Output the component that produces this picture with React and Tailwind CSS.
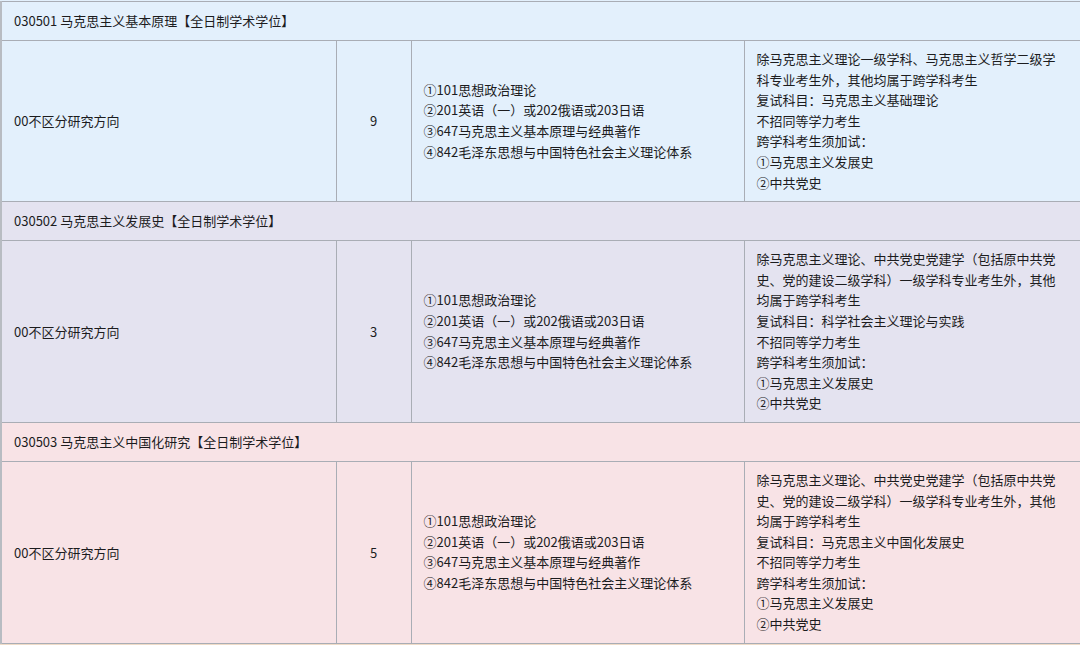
import React from "react";

const exams = [
  "①101思想政治理论",
  "②201英语（一）或202俄语或203日语",
  "③647马克思主义基本原理与经典著作",
  "④842毛泽东思想与中国特色社会主义理论体系",
];

const sections = [
  {
    title: "030501 马克思主义基本原理【全日制学术学位】",
    count: 9,
    bg: "bg-[#e3f0fc]",
    notes: [
      "除马克思主义理论一级学科、马克思主义哲学二级学科专业考生外，其他均属于跨学科考生",
      "复试科目：马克思主义基础理论",
      "不招同等学力考生",
      "跨学科考生须加试：",
      "①马克思主义发展史",
      "②中共党史",
    ],
  },
  {
    title: "030502 马克思主义发展史【全日制学术学位】",
    count: 3,
    bg: "bg-[#e4e3f0]",
    notes: [
      "除马克思主义理论、中共党史党建学（包括原中共党史、党的建设二级学科）一级学科专业考生外，其他均属于跨学科考生",
      "复试科目：科学社会主义理论与实践",
      "不招同等学力考生",
      "跨学科考生须加试：",
      "①马克思主义发展史",
      "②中共党史",
    ],
  },
  {
    title: "030503 马克思主义中国化研究【全日制学术学位】",
    count: 5,
    bg: "bg-[#f8e3e6]",
    notes: [
      "除马克思主义理论、中共党史党建学（包括原中共党史、党的建设二级学科）一级学科专业考生外，其他均属于跨学科考生",
      "复试科目：马克思主义中国化发展史",
      "不招同等学力考生",
      "跨学科考生须加试：",
      "①马克思主义发展史",
      "②中共党史",
    ],
  },
];

const cell = "border border-[#a9adb5] align-middle";

export default function App() {
  return (
    <div
      className="w-[1080px] h-[645px] overflow-hidden bg-[#f0dcc8] text-[13px] text-[#1c1c1e]"
      style={{ fontFamily: '"Noto Sans CJK SC", "Noto Sans", sans-serif' }}
    >
      <div className="h-px bg-[#e3f0fc]" />
      <table className="table-fixed border-collapse w-[1079px] border-l-2 border-l-[#b8bcc2]">
        <colgroup>
          <col className="w-[335px]" />
          <col className="w-[75px]" />
          <col className="w-[333px]" />
          <col className="w-[336px]" />
        </colgroup>
        <tbody>
          {sections.map((s) => (
            <React.Fragment key={s.title}>
              <tr className={s.bg}>
                <td colSpan={4} className={`${cell} h-[39px] px-3`}>
                  {s.title}
                </td>
              </tr>
              <tr className={s.bg}>
                <td className={`${cell} px-3`}>00不区分研究方向</td>
                <td className={`${cell} text-center`}>{s.count}</td>
                <td className={`${cell} px-3 leading-[20.6px]`}>
                  {exams.map((e) => (
                    <div key={e}>{e}</div>
                  ))}
                </td>
                <td className={`${cell} px-3 py-2 leading-[20.6px]`}>
                  {s.notes.map((n) => (
                    <div key={n}>{n}</div>
                  ))}
                </td>
              </tr>
            </React.Fragment>
          ))}
        </tbody>
      </table>
    </div>
  );
}
